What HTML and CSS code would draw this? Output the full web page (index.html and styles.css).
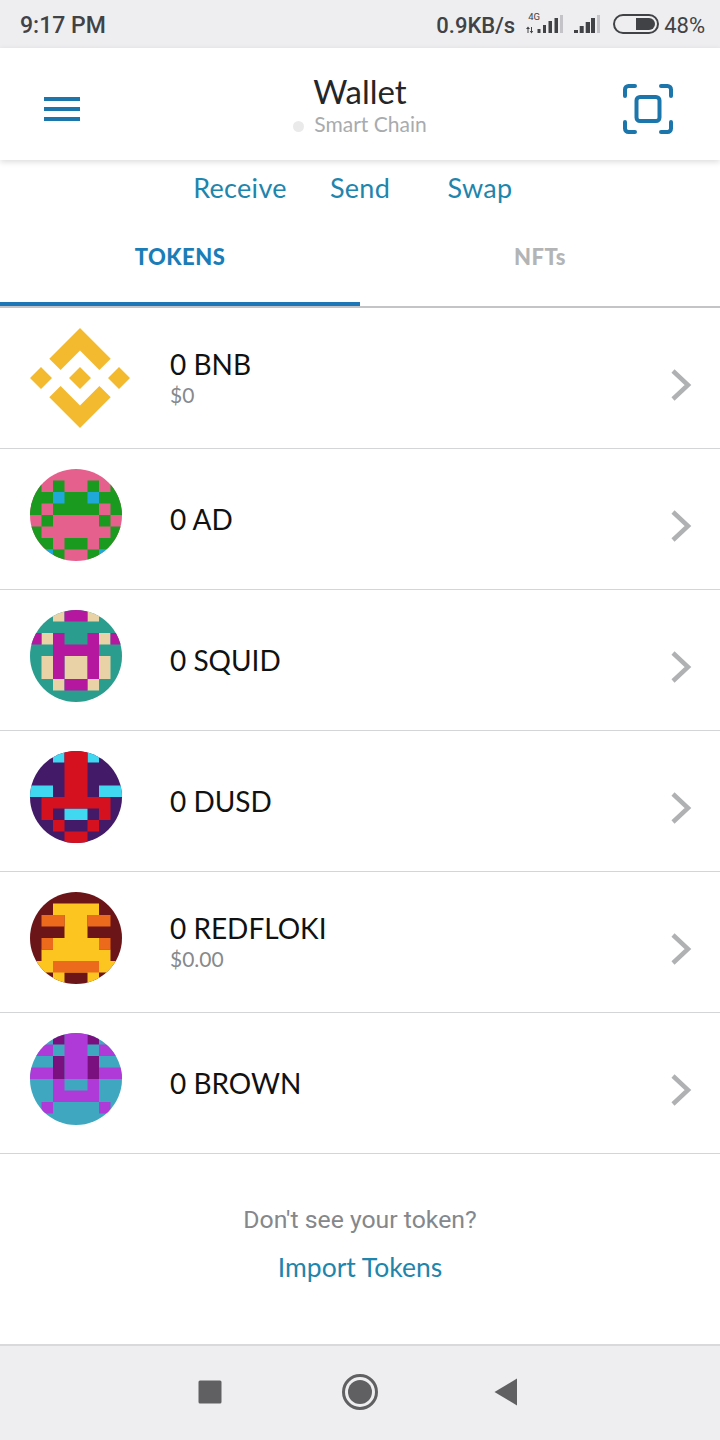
FILE: index.html
```html
<!DOCTYPE html>
<html lang="en">
<head>
<meta charset="utf-8">
<title>Wallet</title>
<link rel="stylesheet" href="styles.css">
</head>
<body>
<div class="app">
  <div class="status">
    <span class="time">9:17 PM</span>
    <div class="status-right">
      <span class="speed">0.9KB/s</span>
      <div class="sig-4g">
        <span class="net">4G</span>
        <svg class="sig-a" width="38" height="22" viewBox="0 0 38 22"><path class="si-fill" d="M1.500 21v-4L0 17l2-2.500L4 17H2.500v4zM5 15v4H3.800L5.500 21.500 7.200 19H6v-4zM11.500 17h3v4h-3zM17 13h3v8h-3zM22.500 9H26v12h-3.500zM28.500 6H32v15h-3.500z"/><path class="si-off" d="M34 3h3v18h-3z"/></svg>
      </div>
      <svg class="sig-b" width="28" height="20" viewBox="0 0 28 20"><path class="si-fill" d="M1 16h4v3H1zM6.700 12h4v7h-4zM12.700 8h4.300v11h-4.300zM18 4h4v15h-4z"/><path class="si-off" d="M24 1h3v18h-3z"/></svg>
      <svg class="batt" width="46" height="20" viewBox="0 0 46 20"><rect class="batt-o" x="1" y="1" width="44" height="18" rx="9"/><path class="si-fill" d="M23 4h13a6 6 0 0 1 0 12H23z"/></svg>
      <span class="pct">48%</span>
    </div>
  </div>

  <header class="bar">
    <svg class="menu" width="36" height="25" viewBox="0 0 36 25"><path d="M0 0h36v4H0zM0 10h36v4H0zM0 20h36v4H0z"/></svg>
    <div class="title">
      <div class="wallet">Wallet</div>
      <div class="network"><i class="dot"></i>Smart Chain</div>
    </div>
    <svg class="scan" width="50" height="50" viewBox="0 0 50 50"><path d="M12 2H5.500A3.500 3.500 0 0 0 2 5.500V12M38 2h6.500A3.500 3.500 0 0 1 48 5.500V12M12 48H5.500A3.500 3.500 0 0 1 2 44.500V38M38 48h6.500a3.500 3.500 0 0 0 3.500-3.500V38"/><rect x="13.500" y="13" width="23" height="24" rx="3.500"/></svg>
  </header>

  <nav class="actions">
    <a class="action">Receive</a>
    <a class="action">Send</a>
    <a class="action">Swap</a>
  </nav>

  <div class="tabs">
    <div class="tab tab-on">TOKENS</div>
    <div class="tab">NFTs</div>
  </div>

  <ul class="list">
    <li class="row">
      <svg class="bnb" width="100" height="100" viewBox="0 0 100 100"><path d="M50 0l30.700 30.800-11.300 11.200L50 22.600 30.600 42 19.300 30.800zM50 100L19.300 69.200 30.600 58 50 77.400 69.400 58l11.300 11.200zM50 39l11 11-11 11-11-11zM11 39l11 11-11 11L0 50zM89 39l11 11-11 11-11-11z"/></svg>
      <div class="info"><div class="name">0 BNB</div><div class="fiat">$0</div></div>
      <svg class="chev" width="22" height="34" viewBox="0 0 22 34"><path d="M3 3l15 14L3 31"/></svg>
    </li>
    <li class="row">
      <svg class="ava ava-ad" width="92" height="92" viewBox="0 0 8 8">
        <path class="c-g" d="M2 1h1v1H2zM5 1h1v1H5zM7 1h1v1H7zM0 1h1v1H0zM0 2h8v2H0zM1 4h1v1H1zM6 4h1v1H6zM0 5h1v2H0zM7 5h1v2H7zM1 6h1v1H1zM6 6h1v1H6zM3 6h2v1H3zM2 7h1v1H2zM5 7h1v1H5z"/>
        <path class="c-p" d="M1 3h1v1H1zM6 3h1v1H6z"/>
        <path class="c-b" d="M2 2h1v1H2zM5 2h1v1H5zM1 7h1v1H1zM6 7h1v1H6z"/>
      </svg>
      <div class="info"><div class="name">0 AD</div></div>
      <svg class="chev" width="22" height="34" viewBox="0 0 22 34"><path d="M3 3l15 14L3 31"/></svg>
    </li>
    <li class="row">
      <svg class="ava ava-squid" width="92" height="92" viewBox="0 0 8 8">
        <path class="c-tan" d="M2 0h1v1H2zM5 0h1v1H5zM1 2h1v1H1zM6 2h1v1H6zM1 4h1v2H1zM6 4h1v2H6zM3 4h2v2H3zM2 6h1v1H2zM5 6h1v1H5z"/>
        <path class="c-mag" d="M3 0h2v1H3zM0 2h1v1H0zM7 2h1v1H7zM2 2h1v4H2zM5 2h1v4H5zM3 3h2v1H3zM3 6h2v1H3z"/>
      </svg>
      <div class="info"><div class="name">0 SQUID</div></div>
      <svg class="chev" width="22" height="34" viewBox="0 0 22 34"><path d="M3 3l15 14L3 31"/></svg>
    </li>
    <li class="row">
      <svg class="ava ava-dusd" width="92" height="92" viewBox="0 0 8 8">
        <path class="c-cy" d="M2 0h1v1H2zM5 0h1v1H5zM0 3h2v1H0zM6 3h2v1H6zM3 5h2v1H3z"/>
        <path class="c-red" d="M3 0h2v4H3zM1 4h6v1H1zM1 5h1v1H1zM6 5h1v1H6zM2 6h1v1H2zM5 6h1v1H5zM3 7h2v1H3z"/>
      </svg>
      <div class="info"><div class="name">0 DUSD</div></div>
      <svg class="chev" width="22" height="34" viewBox="0 0 22 34"><path d="M3 3l15 14L3 31"/></svg>
    </li>
    <li class="row">
      <svg class="ava ava-floki" width="92" height="92" viewBox="0 0 8 8">
        <path class="c-yel" d="M2 1h4v1H2zM3 2h2v2H3zM2 4h4v1H2zM1 5h6v1H1zM0 6h8v1H0zM0 7h1v1H0zM2 7h1v1H2zM5 7h1v1H5zM7 7h1v1H7z"/>
        <path class="c-or" d="M1 2h2v1H1zM5 2h2v1H5zM1 4h1v1H1zM6 4h1v1H6zM2 6h4v1H2z"/>
      </svg>
      <div class="info"><div class="name">0 REDFLOKI</div><div class="fiat">$0.00</div></div>
      <svg class="chev" width="22" height="34" viewBox="0 0 22 34"><path d="M3 3l15 14L3 31"/></svg>
    </li>
    <li class="row">
      <svg class="ava ava-brown" width="92" height="92" viewBox="0 0 8 8">
        <path class="c-pur" d="M3 0h2v4H3zM0 1h2v1H0zM6 1h2v1H6zM0 3h2v1H0zM6 3h2v1H6zM2 4h1v2H2zM5 4h1v2H5zM3 5h2v1H3zM1 6h1v1H1zM6 6h1v1H6z"/>
        <path class="c-dk" d="M2 0h1v1H2zM5 0h1v1H5zM2 2h1v2H2zM5 2h1v2H5z"/>
      </svg>
      <div class="info"><div class="name">0 BROWN</div></div>
      <svg class="chev" width="22" height="34" viewBox="0 0 22 34"><path d="M3 3l15 14L3 31"/></svg>
    </li>
  </ul>

  <div class="foot">
    <div class="foot-q">Don't see your token?</div>
    <a class="foot-link">Import Tokens</a>
  </div>

  <div class="softkeys">
    <svg class="key-sq" width="24" height="24" viewBox="0 0 24 24"><rect class="key" x="0.500" y="0.500" width="23" height="23" rx="1.500"/></svg>
    <svg width="36" height="36" viewBox="0 0 36 36"><circle class="key-ring" cx="18" cy="18" r="16.500"/><circle class="key" cx="18" cy="18" r="12"/></svg>
    <svg class="key-back" width="24" height="28" viewBox="0 0 24 28"><path class="key" d="M23 0.500v27L0.500 14z"/></svg>
  </div>
</div>
</body>
</html>
```
FILE: styles.css
```css
* { box-sizing: border-box; }
html, body { margin: 0; padding: 0; background: #fff; }
.app { width: 720px; height: 1440px; display: flex; flex-direction: column; font-family: "Lato", "Liberation Sans", sans-serif; overflow: hidden; }

.status { height: 48px; flex: none; background: #eeeef1; display: flex; align-items: center; justify-content: space-between; padding: 2px 15px 0 20px; font-family: Roboto, sans-serif; color: #414245; }
.time { font-size: 23px; font-weight: 500; }
.status-right { display: flex; align-items: center; }
.speed { font-size: 22px; font-weight: 500; margin-right: 11px; }
.sig-4g { position: relative; width: 38px; height: 22px; margin: -4px 9px 0 0; }
.net { position: absolute; left: 2px; top: -1px; font-size: 9.500px; line-height: 11px; }
.sig-a { display: block; }
.sig-b { margin: -2px 12px 0 0; }
.si-fill { fill: #414245; }
.si-off { fill: #c4c4c8; }
.batt { margin: -2px 5px 0 0; }
.batt-o { fill: none; stroke: #414245; stroke-width: 2; }
.pct { font-size: 22px; }

.bar { height: 112px; flex: none; background: #fff; display: flex; align-items: center; justify-content: space-between; padding: 10px 47px 0 44px; position: relative; box-shadow: 0 2px 6px rgba(0,0,0,.14); }
.menu { fill: #1d76ab; }
.title { position: absolute; left: 0; right: 0; top: 23px; text-align: center; }
.wallet { font-size: 33px; line-height: 40px; color: #24272a; }
.network { font-size: 21px; line-height: 26px; color: #a9abad; margin-top: 0; display: flex; justify-content: center; align-items: center; }
.dot { width: 11px; height: 11px; border-radius: 50%; background: #eaeaea; margin: 5px 10px 0 0; }
.scan { fill: none; stroke: #1d76ab; stroke-width: 4; stroke-linecap: round; }

.actions { height: 56px; flex: none; display: flex; justify-content: center; align-items: center; padding-bottom: 2px; }
.action { width: 120px; text-align: center; font-size: 27px; letter-spacing: .3px; color: #1e85ad; }

.tabs { height: 92px; flex: none; display: flex; border-bottom: 2px solid #c4c4c6; }
.tab { width: 360px; text-align: center; font-size: 22px; font-weight: 900; letter-spacing: .5px; color: #b3b4b6; padding-top: 27px; }
.tab-on { color: #1a7db8; border-bottom: 4px solid #1d76b6; }

.list { list-style: none; margin: 0; padding: 0; flex: none; }
.row { height: 141px; display: flex; align-items: center; border-bottom: 1px solid #d4d5d7; padding: 0 28px 0 30px; }
.bnb { fill: #f3ba2f; flex: none; margin-right: 40px; }
.ava { flex: none; margin: 0 48px 9px 0; border-radius: 50%; }
.info { flex: 1; margin-top: -1px; }
.name { font-size: 28px; line-height: 34px; color: #111; }
.fiat { font-size: 21px; line-height: 28px; color: #87898b; }
.chev { flex: none; margin-top: 14px; fill: none; stroke: #b0b1b3; stroke-width: 4.500; }

.ava-ad { background: #e5608c; }
.ava-squid { background: #2a9d8f; }
.ava-dusd { background: #431a68; }
.ava-floki { background: #6b1518; }
.ava-brown { background: #3fa8c0; }
.c-g { fill: #1a9a1e; } .c-p { fill: #e5608c; } .c-b { fill: #20a8d8; }
.c-tan { fill: #e8d2a6; } .c-mag { fill: #b5179e; }
.c-cy { fill: #40d8f0; } .c-red { fill: #d5101f; }
.c-yel { fill: #fdc51f; } .c-or { fill: #ec6a1c; }
.c-pur { fill: #b03ad8; } .c-dk { fill: #7a1080; }

.foot { flex: 1; text-align: center; padding-top: 50px; }
.foot-q { font-family: Roboto, sans-serif; font-size: 24.800px; line-height: 32px; color: #85878a; }
.foot-link { display: block; font-size: 26.500px; line-height: 32px; margin-top: 15px; color: #1e85ad; }

.softkeys { height: 96px; flex: none; background: #eeeef1; border-top: 2px solid #d9d9db; display: flex; align-items: center; justify-content: center; padding: 0 4px 2px 0; }
.key-sq { margin-right: 120px; }
.key-back { margin-left: 116px; }
.key { fill: #606062; }
.key-ring { fill: none; stroke: #606062; stroke-width: 3; }
```
